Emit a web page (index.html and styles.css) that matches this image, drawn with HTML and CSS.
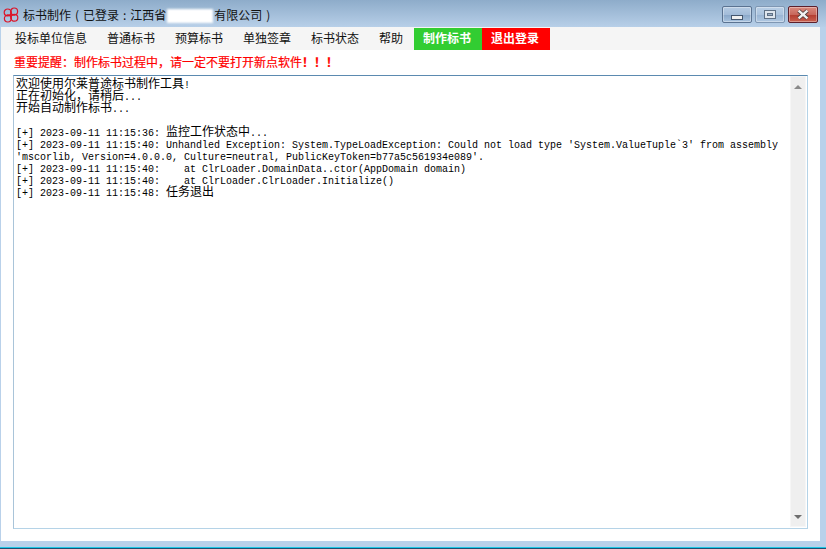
FILE: index.html
```html
<!DOCTYPE html>
<html lang="zh">
<head>
<meta charset="utf-8">
<title>标书制作</title>
<link rel="stylesheet" href="styles.css">
</head>
<body>
<div class="window">
  <header class="titlebar">
    <svg class="logo" viewBox="0 0 16 16" width="16" height="16" fill="none" stroke="#dc1428" stroke-width="1.2">
      <circle cx="4.6" cy="5.4" r="3.4"/>
      <circle cx="11.2" cy="4.4" r="3.4"/>
      <circle cx="4.8" cy="11.6" r="3.4"/>
      <circle cx="11.4" cy="10.8" r="3.4"/>
      <path d="M8 4 V12 M4 8 H12"/>
    </svg>
    <span class="title">标书制作 ( 已登录 : 江西省<span class="redact"></span>有限公司 )</span>
    <div class="controls">
      <button class="ctl"><span class="ico-min"></span></button>
      <button class="ctl soft"><span class="ico-max"><span class="ico-max-in"></span></span></button>
      <button class="ctl close">
        <svg viewBox="0 0 12 10" width="14" height="11"><path d="M2 1.5 L10 8.5 M10 1.5 L2 8.5" stroke="#4a3a3a" stroke-width="3.6"/><path d="M2 1.5 L10 8.5 M10 1.5 L2 8.5" stroke="#f1f1f1" stroke-width="2.2"/></svg>
      </button>
    </div>
  </header>
  <main class="client">
    <nav class="menu">
      <a class="item">投标单位信息</a>
      <a class="item">普通标书</a>
      <a class="item">预算标书</a>
      <a class="item">单独签章</a>
      <a class="item">标书状态</a>
      <a class="item">帮助</a>
      <a class="item action make">制作标书</a>
      <a class="item action quit">退出登录</a>
    </nav>
    <p class="warn">重要提醒&#xFF1A;制作标书过程中&#xFF0C;请一定不要打开新点软件<span class="bang">&#xFF01;&#xFF01;&#xFF01;</span></p>
    <div class="logbox">
      <div class="log">
        <div class="line"><span class="cjk">欢迎使用尔莱普途标书制作工具</span>!</div>
        <div class="line"><span class="cjk">正在初始化&#xFF0C;请稍后</span>...</div>
        <div class="line"><span class="cjk">开始自动制作标书</span>...</div>
        <div class="line"></div>
        <div class="line">[+] 2023-09-11 11:15:36: <span class="cjk">监控工作状态中</span>...</div>
        <div class="line">[+] 2023-09-11 11:15:40: Unhandled Exception: System.TypeLoadException: Could not load type 'System.ValueTuple`3' from assembly</div>
        <div class="line">'mscorlib, Version=4.0.0.0, Culture=neutral, PublicKeyToken=b77a5c561934e089'.</div>
        <div class="line">[+] 2023-09-11 11:15:40:    at ClrLoader.DomainData..ctor(AppDomain domain)</div>
        <div class="line">[+] 2023-09-11 11:15:40:    at ClrLoader.ClrLoader.Initialize()</div>
        <div class="line">[+] 2023-09-11 11:15:48: <span class="cjk">任务退出</span></div>
      </div>
      <div class="scrollbar">
        <span class="arrow up"></span>
        <span class="arrow down"></span>
      </div>
    </div>
  </main>
  <div class="bottomline"></div>
  <div class="bottomedge"></div>
</div>
</body>
</html>
```
FILE: styles.css
```css
* { box-sizing: border-box; }
html, body { margin: 0; padding: 0; }
body { width: 826px; height: 549px; overflow: hidden; background: #b9d1ea; font-family: "Noto Sans CJK SC", sans-serif; }
.window { width: 826px; height: 549px; display: flex; flex-direction: column; background: #b9d1ea; }
.titlebar { height: 27px; flex: none; display: flex; align-items: center; padding: 3px 8px 0 3px; background: linear-gradient(#8eacca, #b7cfe8); }
.logo { flex: none; margin-right: 4px; }
.title { font-size: 12px; color: #111; white-space: pre; flex: 1; line-height: 16px; word-spacing: 1.3px; }
.redact { display: inline-block; width: 46px; height: 14px; vertical-align: -3px; margin: 0 1px; background: #fff; filter: blur(1px); }
.controls { display: flex; gap: 3px; margin-top: -1px; }
.ctl { width: 30px; height: 17px; padding: 0; display: flex; align-items: center; justify-content: center; border: 1px solid #5b7391; border-radius: 2px; background: linear-gradient(#b5cbe3 0, #a3bcd9 50%, #88a6c8 51%, #a8c2de 100%); box-shadow: inset 0 0 0 1px rgba(255,255,255,.35); }
.ctl.soft { border-color: #7f97b3; background: linear-gradient(#b9cfe6 0, #abc3de 50%, #98b4d3 51%, #b0c8e2 100%); }
.ctl.close { border-color: #5c1f2b; background: linear-gradient(#d98a7e 0, #c8675b 50%, #b23b2e 51%, #c9604f 100%); }
.ico-min { width: 12px; height: 5px; margin-top: 5px; background: #f0f0f0; border: 1px solid #44566e; }
.ico-max { width: 12px; height: 9px; display: flex; align-items: center; justify-content: center; background: #dfe6ee; border: 1px solid #5f7085; }
.ico-max-in { width: 6px; height: 3px; background: #9db0c6; border: 1px solid #5f7085; }
.client { flex: none; width: 819px; height: 514px; margin-left: 1px; background: #fff; display: flex; flex-direction: column; }
.menu { height: 23px; flex: none; display: flex; padding: 1px 0 0 4px; background: #f5f5f5; }
.item { padding: 0 10px; font-size: 12px; line-height: 20px; color: #111; }
.action { margin-bottom: 1px; height: 22px; padding: 0 11px 0 9px; font-weight: 700; color: #fff; }
.make { margin-left: 1px; background: #32cd32; }
.quit { background: #f00; }
.warn { margin: 3px 0 0 13px; height: 22px; flex: none; font-size: 12px; line-height: 17px; color: #f00; white-space: pre; -webkit-text-stroke: 0.2px #f00; }
.bang { font-family: "Noto Sans CJK TC", sans-serif; font-weight: 700; }
.logbox { flex: none; display: flex; width: 795px; height: 454px; margin-left: 12px; padding: 0 1px 1px 0; border: 1px solid; border-color: #5b8ab0 #b5d3e7 #b5d3e7 #a9c4d9; background: #fff; }
.log { flex: 1; padding: 4px 0 0 2px; font-family: "Liberation Mono", monospace; font-size: 10px; color: #000; }
.line { height: 12px; line-height: 12px; white-space: pre; }
.cjk { font-family: "Noto Sans CJK SC", sans-serif; font-size: 12px; line-height: 0; }
.scrollbar { flex: none; width: 16px; display: flex; flex-direction: column; justify-content: space-between; align-items: center; padding: 8px 0 7px; background: #efefef; border: 1px solid #f6f6f6; }
.arrow { width: 0; height: 0; border-left: 4px solid transparent; border-right: 4px solid transparent; }
.arrow.up { border-bottom: 4px solid #8a8a8a; }
.arrow.down { border-top: 4px solid #6e6e6e; }
.bottomline { height: 1px; margin-top: 6px; background: #1fc8e6; flex: none; }
.bottomedge { height: 1px; background: #1d4f72; flex: none; }
```
